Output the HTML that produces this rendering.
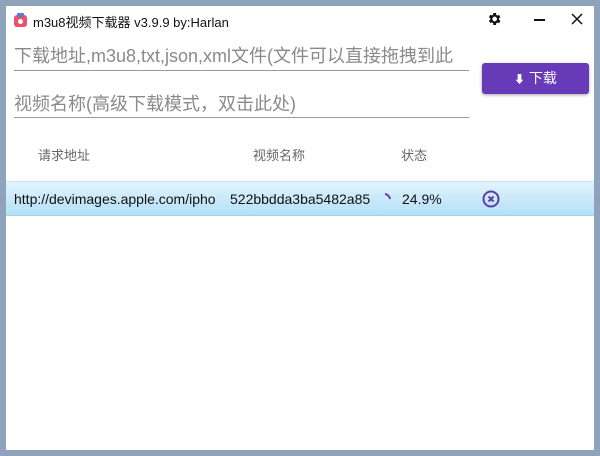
<!DOCTYPE html>
<html><head><meta charset="utf-8"><style>
*{margin:0;padding:0;box-sizing:border-box}
body{width:600px;height:456px;background:#8fa3bd;position:relative;overflow:hidden;font-family:"Liberation Sans","Noto Sans CJK SC",sans-serif}
#win{position:absolute;left:6px;top:6px;width:588px;height:444px;background:#fff}
.a{position:absolute;white-space:nowrap}
.inp{position:absolute;left:8px;width:455px;border-bottom:1.5px solid #999;color:#8a8a8a;font-size:18px;overflow:hidden;white-space:nowrap}
</style></head><body>
<div id="win">
<svg class="a" style="left:8px;top:7px" width="13" height="14" viewBox="0 0 13 14"><rect x="0" y="2" width="13" height="12" rx="3" fill="#e8546a"/><rect x="3" y="0" width="7" height="4" rx="1" fill="#5a7ad8"/><circle cx="6.5" cy="8.5" r="2.5" fill="#fff"/></svg>
<div class="a" style="left:27px;top:6px;font-size:13px;color:#111">m3u8视频下载器 v3.9.9 by:Harlan</div>
<svg class="a" style="left:480px;top:5px" width="16" height="16" viewBox="0 0 24 24"><path fill="#111" d="M19.4 13a7.5 7.5 0 000-2l2.1-1.6-2-3.5-2.5 1a7 7 0 00-1.7-1L15 3h-4l-.4 2.7a7 7 0 00-1.7 1l-2.5-1-2 3.5L6.5 11a7.5 7.5 0 000 2l-2.1 1.6 2 3.5 2.5-1a7 7 0 001.7 1L11 21h4l.4-2.7a7 7 0 001.7-1l2.5 1 2-3.5zM13 15.5a3.5 3.5 0 110-7 3.5 3.5 0 010 7z"/></svg>
<div class="a" style="left:528px;top:13px;width:11px;height:1.5px;background:#111"></div>
<svg class="a" style="left:565px;top:7px" width="12" height="12"><path d="M1 1L11 11M11 1L1 11" stroke="#111" stroke-width="1.5"/></svg>
<div class="inp" style="top:36px;height:29px">下载地址,m3u8,txt,json,xml文件(文件可以直接拖拽到此</div>
<div class="inp" style="top:84px;height:28px">视频名称(高级下载模式，双击此处)</div>
<div class="a" style="left:476px;top:57px;width:107px;height:31px;background:#673ab7;border-radius:3px;box-shadow:0 1px 3px rgba(0,0,0,.35);color:#fff;font-size:14px;text-align:center;line-height:31px"><span style="font-size:11px">⬇</span> 下载</div>
<div class="a" style="left:32px;top:139px;font-size:13px;color:#666">请求地址</div>
<div class="a" style="left:247px;top:139px;font-size:13px;color:#666">视频名称</div>
<div class="a" style="left:395px;top:139px;font-size:13px;color:#666">状态</div>
<div class="a" style="left:0;top:175px;width:588px;height:35px;background:linear-gradient(#e2f3fc,#b4e0f7);border-top:1px solid #c8e6f5;border-bottom:1px solid #9fd4f0"></div>
<div class="a" style="left:8px;top:185px;font-size:14px;color:#111">http://devimages.apple.com/ipho</div>
<div class="a" style="left:224px;top:185px;font-size:14px;color:#111">522bbdda3ba5482a85</div>
<svg class="a" style="left:375px;top:186px" width="14" height="14"><path d="M4 2A6 6 0 0 1 9 7" stroke="#5b3fa8" stroke-width="2" fill="none"/></svg>
<div class="a" style="left:396px;top:185px;font-size:14px;color:#111">24.9%</div>
<svg class="a" style="left:476px;top:184px" width="18" height="18"><circle cx="9" cy="9" r="7.5" stroke="#5b3fa8" stroke-width="2" fill="none"/><path d="M6.5 6.5L11.5 11.5M11.5 6.5L6.5 11.5" stroke="#5b3fa8" stroke-width="2"/></svg>
</div>
</body></html>
